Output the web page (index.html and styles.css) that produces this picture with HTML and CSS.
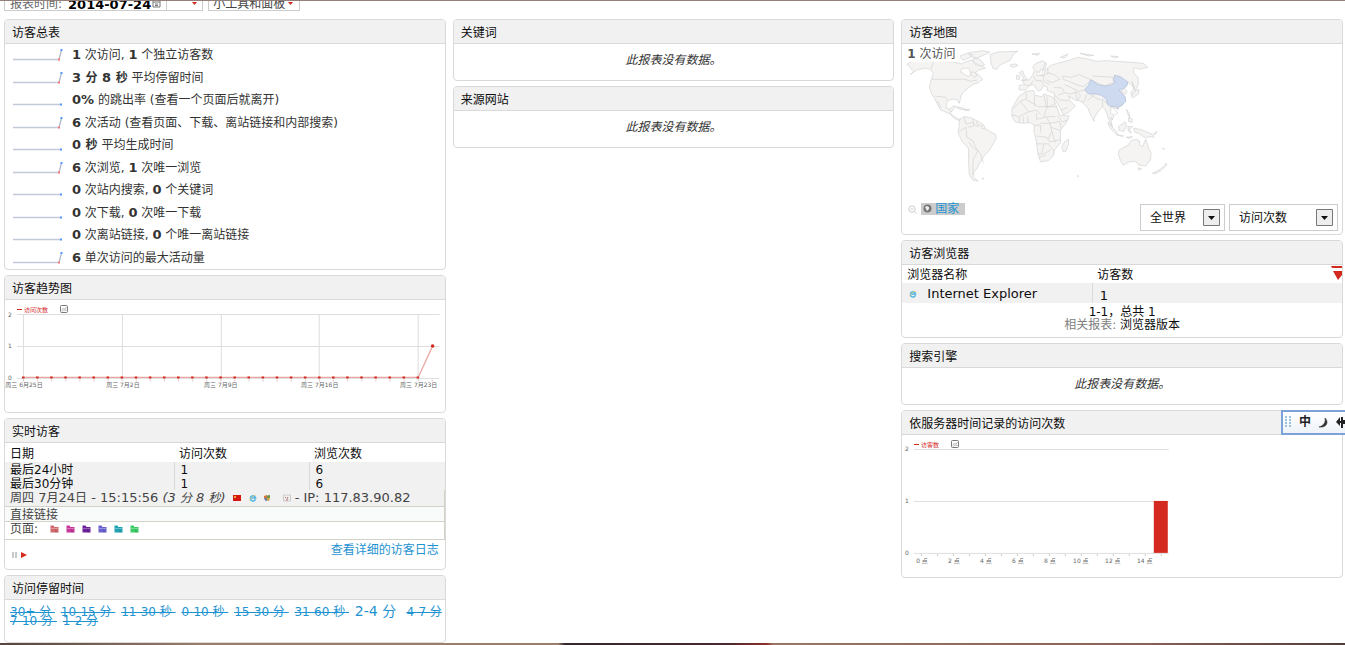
FILE: index.html
```html
<!DOCTYPE html>
<html lang="zh-CN">
<head>
<meta charset="utf-8">
<title>访客统计</title>
<link rel="stylesheet" href="styles.css">
</head>
<body>
<svg class="defs" width="0" height="0" aria-hidden="true">
  <defs>
    <symbol id="spark-up" viewBox="0 0 50 14"><path d="M0 11.5H46" stroke="#c3c9d6" stroke-width="1.4"/><path d="M46 11.5L48.500 2" stroke="#a9b4c4" stroke-width="1.2" fill="none"/><path d="M45 10.500h2v2h-2z" fill="#f77"/><path d="M47.500 1h2v2h-2z" fill="#59f"/></symbol>
    <symbol id="spark-flat" viewBox="0 0 50 14"><path d="M0 11.5H48" stroke="#c3c9d6" stroke-width="1.4"/><path d="M47 10.500h2v2h-2z" fill="#59f"/></symbol>
    <symbol id="folder" viewBox="0 0 9 8"><path d="M.5 .5h3l1 1.500h4v5.500h-8z" fill="currentColor"/><path d="M1 3h7v1H1z" fill="#fff" opacity=".3"/><path d="M5 4l3.500 3.500H5z" fill="#000" opacity=".12"/></symbol>
    <symbol id="ie" viewBox="0 0 8 8"><path d="M6.500 5.300A2.600 2.600 0 1 1 6.600 4H2.500" fill="none" stroke="#4db4e4" stroke-width="1.500"/><path d="M.8 6.800C0 5 5 .5 7.300 1.300" fill="none" stroke="#e8c766" stroke-width=".7"/></symbol>
    <symbol id="chart-icon" viewBox="0 0 8 8"><rect x=".5" y=".5" width="7" height="7" rx="1" fill="#fff" stroke="#777"/><path d="M1.500 5.500L3.500 3 5 4.500 6.500 2M2 6.500L4 5l2.500.5" fill="none" stroke="#aaa" stroke-width=".8"/></symbol>
  </defs>
</svg>

<header class="topbar">
  <button class="control control-date" type="button"><span class="muted">报表时间:</span> <strong>2014-07-24</strong>
    <svg class="calendar" viewBox="0 0 9 9"><path d="M1 1h7v7H1zM1 3h7M3 5h3M3 6.500h3" fill="none" stroke="#777"/></svg>
    <span class="control-end"><svg class="caret" viewBox="0 0 5 3"><path d="M0 0h5L2.500 3z"/></svg></span>
  </button>
  <button class="control" type="button">小工具和面板 <svg class="caret" viewBox="0 0 5 3"><path d="M0 0h5L2.500 3z"/></svg></button>
</header>

<main class="dashboard">
  <div class="column">
    <section class="widget">
      <h2>访客总表</h2>
      <ul class="summary">
        <li><svg class="spark"><use href="#spark-up"/></svg><span><b>1</b> 次访问, <b>1</b> 个独立访客数</span></li>
        <li><svg class="spark"><use href="#spark-up"/></svg><span><b>3 <small>分</small> 8 <small>秒</small></b> 平均停留时间</span></li>
        <li><svg class="spark"><use href="#spark-flat"/></svg><span><b>0%</b> 的跳出率 (查看一个页面后就离开)</span></li>
        <li><svg class="spark"><use href="#spark-up"/></svg><span><b>6</b> 次活动 (查看页面、下载、离站链接和内部搜索)</span></li>
        <li><svg class="spark"><use href="#spark-flat"/></svg><span><b>0 <small>秒</small></b> 平均生成时间</span></li>
        <li><svg class="spark"><use href="#spark-up"/></svg><span><b>6</b> 次浏览, <b>1</b> 次唯一浏览</span></li>
        <li><svg class="spark"><use href="#spark-flat"/></svg><span><b>0</b> 次站内搜索, <b>0</b> 个关键词</span></li>
        <li><svg class="spark"><use href="#spark-flat"/></svg><span><b>0</b> 次下载, <b>0</b> 次唯一下载</span></li>
        <li><svg class="spark"><use href="#spark-flat"/></svg><span><b>0</b> 次离站链接, <b>0</b> 个唯一离站链接</span></li>
        <li><svg class="spark"><use href="#spark-up"/></svg><span><b>6</b> 单次访问的最大活动量</span></li>
      </ul>
    </section>

    <section class="widget">
      <h2>访客趋势图</h2>
      <svg class="chart" viewBox="0 0 440 112">
        <path d="M12 14.500H435M12 46.500H435M12 78.500H435M18.500 14V80M117.500 14V80M216.500 14V80M314.500 14V80M413.500 14V80" stroke="#dedede" fill="none"/>
        <path d="M18 80.500H430" stroke="#ccc" stroke-width="2" stroke-dasharray="1 13.107"/>
        <path d="M18.500 77.500H413.500L428 46" fill="none" stroke="#e9a5a1" stroke-width="1.300"/>
        <path d="M17 77.500H416" stroke="#d4291f" stroke-width="2" stroke-dasharray="2.500 11.607"/>
        <circle cx="428" cy="46" r="1.800" fill="#d4291f"/>
        <path d="M12 9.500h5" stroke="#d4291f"/>
        <text x="19" y="12" class="legend">访问次数</text>
        <use href="#chart-icon" x="55" y="5" width="8" height="8"/>
        <g class="ticks"><text x="3" y="17">2</text><text x="3" y="48">1</text><text x="3" y="80">0</text></g>
        <g class="ticks days"><text x="19" y="87">周三 6月25日</text><text x="118" y="87">周三 7月2日</text><text x="216" y="87">周三 7月9日</text><text x="315" y="87">周三 7月16日</text><text x="414" y="87">周三 7月23日</text></g>
      </svg>
    </section>

    <section class="widget">
      <h2>实时访客</h2>
      <table class="live">
        <thead><tr><th scope="col">日期</th><th scope="col">访问次数</th><th scope="col">浏览次数</th></tr></thead>
        <tbody>
          <tr><td>最后24小时</td><td>1</td><td>6</td></tr>
          <tr><td>最后30分钟</td><td>1</td><td>6</td></tr>
        </tbody>
      </table>
      <div class="visit">
        <div class="visit-row visit-main">
          <span><small>周四</small> 7<small>月</small>24<small>日</small> - 15:15:56 <i>(3 <small>分</small> 8 <small>秒</small>)</i></span>
          <svg class="flag" viewBox="0 0 8 6"><path d="M0 0h8v6H0z" fill="#d5150f"/><path d="M1 1h2v2H1z" fill="#f3a13a"/></svg>
          <svg class="glyph glyph-ie"><use href="#ie"/></svg>
          <svg class="glyph glyph-os" viewBox="0 0 8 8"><path d="M1 2l3-1v3H1z" fill="#d9733c"/><path d="M4 1.500L7 1v3H4z" fill="#6f9a4b"/><path d="M1 4h3v3L2 6.500z" fill="#667ea8"/><path d="M4 4h3L6 7 4 6.500z" fill="#d2a43b"/></svg>
          <svg class="glyph" viewBox="0 0 8 8"><path d="M.5 1h7v6h-7z" fill="#eee" stroke="#ccc"/><path d="M2 3l1 1M5 3L4 5M3 6h2" stroke="#b77" fill="none"/></svg>
          <span>- IP: 117.83.90.82</span>
        </div>
        <div class="visit-row visit-ref">直接链接</div>
        <div class="visit-row visit-pages"><span>页面:</span>
          <svg class="folder c1"><use href="#folder"/></svg><svg class="folder c2"><use href="#folder"/></svg><svg class="folder c3"><use href="#folder"/></svg><svg class="folder c4"><use href="#folder"/></svg><svg class="folder c5"><use href="#folder"/></svg><svg class="folder c6"><use href="#folder"/></svg>
        </div>
      </div>
      <div class="live-foot">
        <svg class="playback" viewBox="0 0 15 6"><path d="M0 0h2v6H0zM3 0h2v6H3z" fill="#c9c9c9"/><path d="M9 0l6 3-6 3z" fill="#d4291f"/></svg>
        <a href="#log">查看详细的访客日志</a>
      </div>
    </section>

    <section class="widget">
      <h2>访问停留时间</h2>
      <div class="cloud"><a href="#d">30+ 分&nbsp;</a> <a href="#d">10-15 分&nbsp;</a> <a href="#d">11-30 秒&nbsp;</a> <a href="#d">0-10 秒&nbsp;</a> <a href="#d">15-30 分&nbsp;</a> <a href="#d">31-60 秒&nbsp;</a> <a class="top" href="#d">2-4 分&nbsp;</a> <a href="#d">4-7 分</a> <a href="#d">7-10 分&nbsp;</a> <a href="#d">1-2 分</a></div>
    </section>
  </div>

  <div class="column">
    <section class="widget"><h2>关键词</h2><p class="empty">此报表没有数据。</p></section>
    <section class="widget"><h2>来源网站</h2><p class="empty">此报表没有数据。</p></section>
  </div>

  <div class="column">
    <section class="widget">
      <h2>访客地图</h2>
      <div class="map">
        <span class="map-total"><b>1</b> 次访问</span>
        <svg class="world" viewBox="6 12 1320 450">
          <g class="land">
            <path d="M20 74L42 60 100 64 160 66 185 72 200 64 218 60 226 74 246 78 256 84 238 90 226 98 232 106 222 112 212 100 206 84 186 86 182 96 198 106 208 110 214 96 222 96 240 108 248 118 236 128 222 132 208 142 192 154 184 166 178 190 170 178 154 178 142 184 138 202 148 208 160 198 166 200 156 214 150 218 160 228 172 236 184 238 178 242 164 236 150 222 136 216 120 208 104 176 96 164 88 140 94 118 100 100 90 88 78 84 50 90 30 104 42 96 34 88 28 78z"/>
            <path d="M96 118H196L212 124 232 120M94 88L100 64M104 168L136 172 142 180M112 182L124 204M148 208L156 216"/>
            <path d="M180 48l22-8 16 4-10 10-20 6zM206 38l42-6 22 4-20 10-18 8-20-4zM222 54l18 4 14 16-12 4-22-12zM270 44l24-8 60-2-14 8-8 18-30 14-12 14-10-2-6-14zM332 74l14-2 8 4-14 6-8-2zM166 200l22 4 10 6-18-2zM194 208l14 0 0 4-12 0z"/>
            <path d="M178 240L192 230 214 234 238 246 250 254 258 268 288 284 288 298 276 318 268 332 256 344 246 358 240 368 232 384 222 396 220 410 234 424 218 420 208 404 206 370 206 326 186 304 174 278 178 256z"/>
            <path d="M192 232l6 20 18-4 12 10 22 0M176 276l22-14 2 30 18 10 10 22 14 18 8 28M206 306l10 14 18 14-14 22-2 48M218 236l4 22-18 4M236 256l-8-12M244 264l12 4"/>
            <path d="M358 150L358 136 374 134 368 122 386 120 398 106 404 90 398 82 408 70 428 62 440 70 434 92 424 86 418 98 410 94 412 108 430 104 442 84 454 76 480 68 510 60 534 52 560 56 590 64 620 62 680 66 730 70 744 82 720 88 704 82 700 96 714 112 716 132 706 154 696 166 692 158 704 144 684 126 674 146 682 154 676 164 664 152 676 180 668 196 652 206 634 202 632 218 642 226 638 240 632 232 638 264 628 242 618 212 608 200 594 216 582 236 584 244 572 226 564 204 544 184 526 180 506 168 512 184 526 198 506 218 490 224 484 210 464 176 464 160 442 152 442 142 430 136 424 150 416 154 400 134 390 136 376 150z"/>
            <path d="M400 108l8 14 16 0 6 12M416 104l14 4 14-10 20 6 16 14-24 10-16-8M374 134l14 4 12-16M430 104l2 20 18 10M444 84l0 20M488 108l26 4 24-8 38 16-24 20-24-6-20-10-18-6zM494 134l22 10 20 10 18-4M462 142l24 2 8 14-20 8M494 158l18 4 22-6 8 12-10 14M526 154l6 26M560 162l-6 22-10 2M578 108l60 4 6 14-30 12-38-16M572 166l24 12 16 2 6 10M562 182l22-18M608 182l0 18M642 204l12 16-12 6M464 166l16 14 26 2M484 210l20-8M436 68l-10 32"/>
            <path d="M358 98l10-6 4 12 10 14-18 4 8-8zM350 106l10 2-2 10-8 0z"/>
            <path d="M356 170L378 154 402 152 404 166 426 170 432 162 460 172 466 190 480 226 508 228 498 250 482 270 482 308 464 330 460 348 446 362 422 366 414 342 410 306 402 274 404 256 390 248 366 250 346 246 336 230 336 206z"/>
            <path d="M378 156l2 20-18 8-22 22M380 180l36 20 22 0M404 168l0 30M432 166l8 36-8 30M362 184l24 32-30 14-20-6M386 216l24-6 12 14M440 200h30M466 190l-26 14M410 220l0 18 32-8 24 0M440 232l10 18 30-6 4 24M404 256h18l0 22M422 250l28 0M450 250l6 24-12 24M410 288l30 4 10 14 30-6M410 312h38M432 314l-6 24M446 314l16 20M414 342h18l20-12M452 262l30 10M442 200l0-30M358 230l0 18M370 230l0 18M384 228l0 22M472 226l16 20 16-6M418 352l20-6M456 274l10 34"/>
            <path d="M490 336l-4-14 8-16 12-8 0 14-8 22zM662 362l-6-18 2-14 26-14 10-14 16-4 10 6-2 10 10 6 10-22 8 26 8 16-2 20-14 18-20-2-12-12-18 2-18 10zM714 384l12 2-8 6zM758 400l24-12 18-18 0 6-16 16-18 10zM624 246l14 16 14 16-2 6-20-20zM656 260l20-14 4 12-8 16-14-2zM684 260l14 0-8 8 4 12-8-6zM650 284l22 4-4 2zM678 292l20-2-8 6zM702 264l24 6 34 14 2 8-14-2-10 4-22-14-12-4zM680 208l8 12 2 14-8-16zM686 234l12 4-2 10-10-4zM702 156l16-8-2 14-18 12-4-4zM696 124l10 24-4 0zM396 42l24-2-6 6zM482 52l22-10-10 12zM540 40l42 6-16 2zM632 48l24 2-8 4zM762 282l10-8-6 10zM788 324l6 4-4 0zM532 408l4 0 0 2zM246 416l6 0-2 2z"/>
          </g>
          <path class="china" d="M554 150L566 136 572 120 582 124 594 134 620 138 636 134 648 126 640 122 644 106 662 110 684 126 682 136 672 146 658 150 664 158 676 170 678 184 668 194 656 200 654 208 650 200 632 200 622 192 620 178 604 166 588 162 566 162z"/>
        </svg>
        <div class="map-controls">
          <svg class="zoom-out" viewBox="0 0 9 9"><circle cx="4" cy="4" r="3.200"/><path d="M2.500 4h3M6.500 6.500L8.500 8.500"/></svg>
          <a class="country" href="#country"><svg viewBox="0 0 9 9"><circle cx="4.500" cy="4.500" r="4" fill="#777"/><path d="M2 3l2-1 2 1 0 2-2 2-1-2z" fill="#eee"/></svg><span>国家</span></a>
          <div class="selects">
            <label class="pick"><select aria-label="区域"><option>全世界</option></select><svg class="drop" viewBox="0 0 17 17"><path d="M.5.5h16v16H.5z" fill="#eee" stroke="#777"/><path d="M5 7h7L8.500 11z" fill="#111"/></svg></label>
            <label class="pick pick-wide"><select aria-label="指标"><option>访问次数</option></select><svg class="drop" viewBox="0 0 17 17"><path d="M.5.5h16v16H.5z" fill="#eee" stroke="#777"/><path d="M5 7h7L8.500 11z" fill="#111"/></svg></label>
          </div>
        </div>
      </div>
    </section>

    <section class="widget">
      <h2>访客浏览器</h2>
      <svg class="sort" viewBox="0 0 11 14"><path d="M0 0h11v2H1zM2 5h9v4L7 14z" fill="#d4291f"/></svg>
      <table class="browsers">
        <thead><tr><th scope="col">浏览器名称</th><th scope="col">访客数</th></tr></thead>
        <tbody><tr><td><svg class="glyph"><use href="#ie"/></svg>Internet Explorer</td><td>1</td></tr></tbody>
      </table>
      <div class="related"><div class="pages">1-1，总共 1</div><div><span class="gray">相关报表:</span> <a href="#versions">浏览器版本</a></div></div>
    </section>

    <section class="widget"><h2>搜索引擎</h2><p class="empty">此报表没有数据。</p></section>

    <section class="widget">
      <h2>依服务器时间记录的访问次数</h2>
      <svg class="chart" viewBox="0 0 440 142">
        <path d="M12 14.500H267M12 66.500H267M12 118.500H267" stroke="#dedede"/>
        <path d="M19 120H266" stroke="#ccc" stroke-width="2" stroke-dasharray="1 15"/>
        <path d="M252 66h14v52h-14z" fill="#d4291f"/>
        <path d="M12 9.500h5" stroke="#d4291f"/>
        <text x="19" y="12" class="legend">访客数</text>
        <use href="#chart-icon" x="49" y="5" width="8" height="8"/>
        <g class="ticks"><text x="3" y="16">2</text><text x="3" y="68">1</text><text x="3" y="120">0</text></g>
        <g class="ticks days"><text x="20" y="128">0 点</text><text x="52" y="128">2 点</text><text x="84" y="128">4 点</text><text x="116" y="128">6 点</text><text x="148" y="128">8 点</text><text x="179" y="128">10 点</text><text x="211" y="128">12 点</text><text x="243" y="128">14 点</text></g>
      </svg>
      <div class="ime">
        <svg class="grip" viewBox="0 0 6 12"><path d="M1 0v12M5 0v12" stroke="#9cc0e0" stroke-width="2" stroke-dasharray="2 1"/></svg>
        <span>中</span>
        <svg class="moon" viewBox="0 0 9 11"><path d="M6 1c4 4 2 10-6 9 4-1 7-4 6-9z" fill="#333" stroke="#333" stroke-width=".6"/></svg>
        <svg class="punct" viewBox="0 0 9 12"><path d="M0 6l4-5v4h1V1h2v3h2v4H7v4H5V7H4v3z" fill="#222"/></svg>
      </div>
    </section>
  </div>
</main>
<div class="desktop-edge"></div>
</body>
</html>
```
FILE: styles.css
```css
* { box-sizing: border-box; }

body {
  margin: 0;
  min-height: 100vh;
  display: flex;
  flex-direction: column;
  overflow: hidden;
  background: #fff;
  border-top: 1px solid #94807a;
  color: #333;
  font: 12px/15px "DejaVu Sans", "Noto Sans CJK SC", sans-serif;
}

svg { display: block; flex: none; }
.defs { position: absolute; }
a { color: #1e93d1; text-decoration: none; }
small { font-size: 12px; }

.topbar {
  display: flex;
  align-items: flex-end;
  gap: 5px;
  height: 10px;
  padding-left: 4px;
  overflow: hidden;
}

.control {
  flex: none;
  display: flex;
  align-items: flex-end;
  gap: 3px;
  height: 26px;
  padding: 0 6px 0 4px;
  border: 1px solid #ccc;
  background: #fff;
  color: #444;
  font: inherit;
  line-height: 11px;
}

.control strong { color: #000; font-size: 13px; }
.control-date { gap: 1px; padding-left: 5px; padding-right: 5px; }
.muted { color: #666; margin-right: 5px; }
.calendar { width: 9px; height: 9px; margin-bottom: 2px; }
.control-end { display: flex; align-items: flex-end; justify-content: flex-end; width: 31px; height: 24px; margin-left: 4px; border-left: 1px solid #ccc; }
.caret { width: 5px; height: 3px; margin-bottom: 5px; fill: #d4291f; }

.dashboard {
  flex: 1;
  display: grid;
  grid-template-columns: repeat(3, minmax(0, 1fr));
  gap: 7px;
  padding: 8px 2px 0 4px;
}

.column { display: flex; flex-direction: column; gap: 5px; }

.widget {
  position: relative;
  border: 1px solid #d9d9d9;
  border-radius: 4px;
  background: #fff;
}

.widget h2 {
  margin: 0;
  padding: 6px 7px 2px;
  border-bottom: 1px solid #d9d9d9;
  border-radius: 3px 3px 0 0;
  background: #f1f1f1;
  color: #0d0d0d;
  font-size: 12px;
  font-weight: normal;
  line-height: 15px;
}

.summary {
  display: grid;
  grid-auto-rows: 1fr;
  align-items: center;
  height: 225px;
  margin: 0;
  padding: 0 8px;
  list-style: none;
}

.summary li { display: flex; align-items: center; gap: 9px; }
.summary b { font-size: 13px; }
.spark { width: 50px; height: 14px; }

.chart { width: 100%; height: auto; }
.chart text { font-family: "DejaVu Sans", "Noto Sans CJK SC", sans-serif; }
.legend { font-size: 6px; fill: #d4291f; }
.ticks { font-size: 6px; fill: #666; }
.days { text-anchor: middle; }

table { width: 100%; border-collapse: collapse; color: #0d0d0d; }
th { font-weight: normal; text-align: left; }
th, td { padding: 0; }
tbody { background: #f1f1f1; }
.live { table-layout: fixed; }
.live th { padding: 4px 5px 0; }
.live td { padding: 2px 6px 0; line-height: 12px; }
.live td:first-child { padding-left: 5px; }
.live th:first-child { width: 169px; }
.live th:nth-child(2) { width: 135px; }
.live td + td { border-left: 1px solid #d9d9d9; }

.visit { border-right: 1px solid #d3d3c7; color: #444; }
.visit-row { display: flex; align-items: center; padding-left: 5px; border-bottom: 1px solid #d3d3c7; }
.visit-main { background: #f1f1f1; font-size: 13px; }
.visit-ref { padding-top: 2px; background: #f9fafa; line-height: 12px; }
.visit-pages { gap: 7px; padding-bottom: 2px; }
.visit-pages span { width: 33px; }
.glyph { width: 8px; height: 8px; margin-right: 4px; }
.flag { width: 8px; height: 6px; margin: 0 8px 0 7px; }
.glyph-ie { margin-right: 6px; }
.glyph-os { margin-right: 12px; }
.folder { width: 9px; height: 8px; }
.c1 { color: #d0696b; }
.c2 { color: #c8379b; }
.c3 { color: #6d2299; }
.c4 { color: #6a62cf; }
.c5 { color: #22a3b5; }
.c6 { color: #3ccb64; }

.live-foot { display: flex; align-items: flex-start; justify-content: space-between; padding: 3px 6px 11px 7px; }
.playback { width: 15px; height: 6px; margin-top: 9px; }

.cloud { padding: 7px 0 16px 5px; line-height: 9px; }
.cloud a { margin-right: 2px; text-decoration: line-through; white-space: nowrap; }
.cloud .top { font-size: 14px; text-decoration: none; }

.empty { margin: 0; padding: 9px 0 12px; text-align: center; font-style: italic; }

.map-total { position: absolute; left: 1px; top: 27px; padding: 0 4px; background: rgba(255, 255, 255, .8); color: #555; }
.world { width: 100%; height: auto; }
.land { fill: #f5f4f3; stroke: #d2d2d2; stroke-width: 2; stroke-linejoin: round; }
.land path:nth-child(2), .land path:nth-child(5), .land path:nth-child(7), .land path:nth-child(10) { fill: none; }
.china { fill: #cddaf0; stroke: #aebbd3; stroke-width: 2; }
.map-controls { display: flex; align-items: flex-start; padding: 9px 4px 3px 6px; }
.zoom-out { width: 9px; height: 9px; margin-top: 2px; fill: none; stroke: #ccc; }
.country { display: flex; align-items: center; gap: 3px; height: 12px; margin-left: 4px; padding: 0 6px 0 2px; background: #ccc; }
.country span { padding-top: 2px; }
.country svg { width: 9px; height: 9px; }
.selects { display: flex; gap: 4px; margin: 1px 0 0 auto; }
.pick { position: relative; width: 85px; height: 27px; }
.pick-wide { width: 109px; }
.pick select { width: 100%; height: 100%; padding: 3px 9px 0; border: 1px solid #ccc; border-radius: 0; appearance: none; background: #fff; color: #0d0d0d; font: inherit; }
.drop { position: absolute; right: 5px; top: 5px; width: 17px; height: 17px; pointer-events: none; }

.sort { position: absolute; right: 0; top: 25px; width: 11px; height: 14px; }
.browsers th { padding: 3px 5px 0; }
.browsers td { padding: 3px 7px 2px; font-size: 13px; }
.browsers td + td { padding: 5px 7px 0; border-left: 1px solid #d9d9d9; }
.browsers th:first-child { width: 190px; }
.browsers td .glyph { display: inline-block; margin-right: 10px; }
.related { padding: 3px 0 5px; text-align: center; line-height: 13px; color: #0d0d0d; }
.related a { color: #0d0d0d; }
.gray { color: #808080; }

.ime {
  position: absolute;
  right: -3px;
  top: -1px;
  display: flex;
  align-items: center;
  gap: 8px;
  width: 64px;
  height: 25px;
  padding-left: 2px;
  overflow: hidden;
  border: 2px solid #7ba3d9;
  border-right: 0;
  background: linear-gradient(#fff, #edf3f9);
  color: #222;
  font-weight: bold;
}

.grip { width: 6px; height: 12px; }
.moon { width: 9px; height: 11px; }
.punct { width: 9px; height: 12px; }

.desktop-edge { flex: none; height: 2px; background: linear-gradient(90deg, #55443f 0, #9b7e6c 15%, #9b7e6c 41.500%, #33282d 42%, #4b2930 54%, #8c3028 57%, #9b7566 57.500%, #8c6056 85%, #513c3b); }
```
